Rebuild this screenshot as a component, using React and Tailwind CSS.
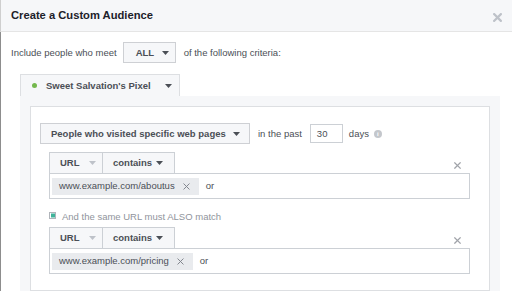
import React from "react";

const Caret = ({ color = "#4b4f56" }) => (
  <svg width="7" height="4" viewBox="0 0 7 4" className="shrink-0">
    <path d="M0 0 L7 0 L3.5 4 Z" fill={color} />
  </svg>
);

const SmallX = ({ size = 7, color = "#90949c", sw = 1.6 }) => (
  <svg width={size} height={size} viewBox="0 0 8 8" className="shrink-0">
    <path d="M1 1 L7 7 M7 1 L1 7" stroke={color} strokeWidth={sw} strokeLinecap="square" />
  </svg>
);

function UrlGroup({ url }) {
  return (
    <div className="ml-[9px] w-[421px] flex flex-col">
      <div className="flex h-[21px] justify-between">
        <div className="flex">
          <div className="w-[54px] h-full bg-[#f6f7f9] border-t border-l border-r border-[#ccd0d5] flex items-center pl-[10px] gap-[9px] font-bold text-[#4b4f56]">
            <span>URL</span>
            <Caret color="#bec2c9" />
          </div>
          <div className="w-[72px] h-full bg-[#f6f7f9] border-t border-r border-[#ccd0d5] flex items-center pl-[10px] gap-[4px] font-bold text-[#4b4f56]">
            <span>contains</span>
            <Caret />
          </div>
        </div>
        <div className="pr-[9px] pt-[10px]">
          <SmallX size={7} color="#a0a3a9" sw={1.5} />
        </div>
      </div>
      <div className="h-[26px] border border-[#ccd0d5] bg-white flex items-center pl-[2px]">
        <div className="h-[17px] bg-[#e9ebee] flex items-center pl-[7px] pr-[9px] text-[#4b4f56]">
          <span>{url}</span>
          <span className="ml-[8px]">
            <SmallX size={7} color="#7f838a" sw={1.1} />
          </span>
        </div>
        <span className="ml-[7px] text-[#4b4f56]">or</span>
      </div>
    </div>
  );
}

export default function App() {
  return (
    <div
      className="w-[512px] h-[291px] overflow-hidden bg-white text-[9.5px] leading-none"
      style={{ fontFamily: '"Liberation Sans", Arial, Helvetica, sans-serif' }}
    >
      <div className="h-[32px] bg-[#f6f7f9] border-b border-[#e5e5e5] border-l border-l-[#cfcfcf] flex items-center justify-between pl-[10px] pr-[10px]">
        <span className="text-[11.2px] font-bold text-[#1d2129]">Create a Custom Audience</span>
        <span className="mt-[3px]">
          <SmallX size={9} color="#bec2c9" sw={2} />
        </span>
      </div>
      <div className="h-[259px] border-l border-[#8d8d8d] flex flex-col">
        <div className="mt-[10px] pl-[10px] flex items-center h-[21px] text-[#4b4f56]">
          <span>Include people who meet</span>
          <div className="ml-[6px] h-[21px] w-[53px] bg-[#f6f7f9] border border-[#ced0d4] flex items-center pl-[12px] gap-[8px] font-bold">
            <span>ALL</span>
            <Caret />
          </div>
          <span className="ml-[8px]">of the following criteria:</span>
        </div>
        <div className="mt-[11px] ml-[19px] w-[160px] h-[22px] bg-[#f6f7f9] border-t border-l border-r border-[#dddfe2] flex items-center pl-[11px] font-bold text-[#4b4f56]">
          <span className="w-[5px] h-[5px] rounded-full bg-[#74b84d] shrink-0" />
          <span className="ml-[9px]">Sweet Salvation's Pixel</span>
          <span className="ml-[14px]">
            <Caret />
          </span>
        </div>
        <div className="ml-[19px] w-[480px] flex-1 bg-[#f6f7f9] pt-[10px] px-[10px]">
          <div className="h-full bg-white border border-[#dddfe2] pt-[16px] pl-[9px] flex flex-col">
            <div className="flex items-center h-[21px] text-[#4b4f56]">
              <div className="w-[210px] h-[21px] bg-[#f6f7f9] border border-[#ced0d4] flex items-center pl-[10px] gap-[7px] font-bold">
                <span>People who visited specific web pages</span>
                <Caret />
              </div>
              <span className="ml-[8px]">in the past</span>
              <div className="ml-[8px] w-[33px] h-[19px] border border-[#ccd0d5] bg-white flex items-center pl-[6px]">
                30
              </div>
              <span className="ml-[6px]">days</span>
              <span className="ml-[5px] w-[8px] h-[8px] rounded-full bg-[#c4c7cc] flex items-center justify-center text-white text-[6px] font-bold">
                i
              </span>
            </div>
            <div className="mt-[8px]">
              <UrlGroup url="www.example.com/aboutus" />
            </div>
            <div className="mt-[12px] ml-[9px] h-[12px] flex items-center text-[#90949c]">
              <svg width="7" height="8" viewBox="0 0 7 8" className="shrink-0 -mt-[3px]">
                <rect x="0.5" y="0.5" width="6" height="6" fill="#ffffff" stroke="#b0b4ba" />
                <rect x="2" y="1.5" width="4" height="4" fill="#3fb39a" />
              </svg>
              <span className="ml-[6px]">And the same URL must ALSO match</span>
            </div>
            <div className="mt-[4px]">
              <UrlGroup url="www.example.com/pricing" />
            </div>
          </div>
        </div>
      </div>
    </div>
  );
}
